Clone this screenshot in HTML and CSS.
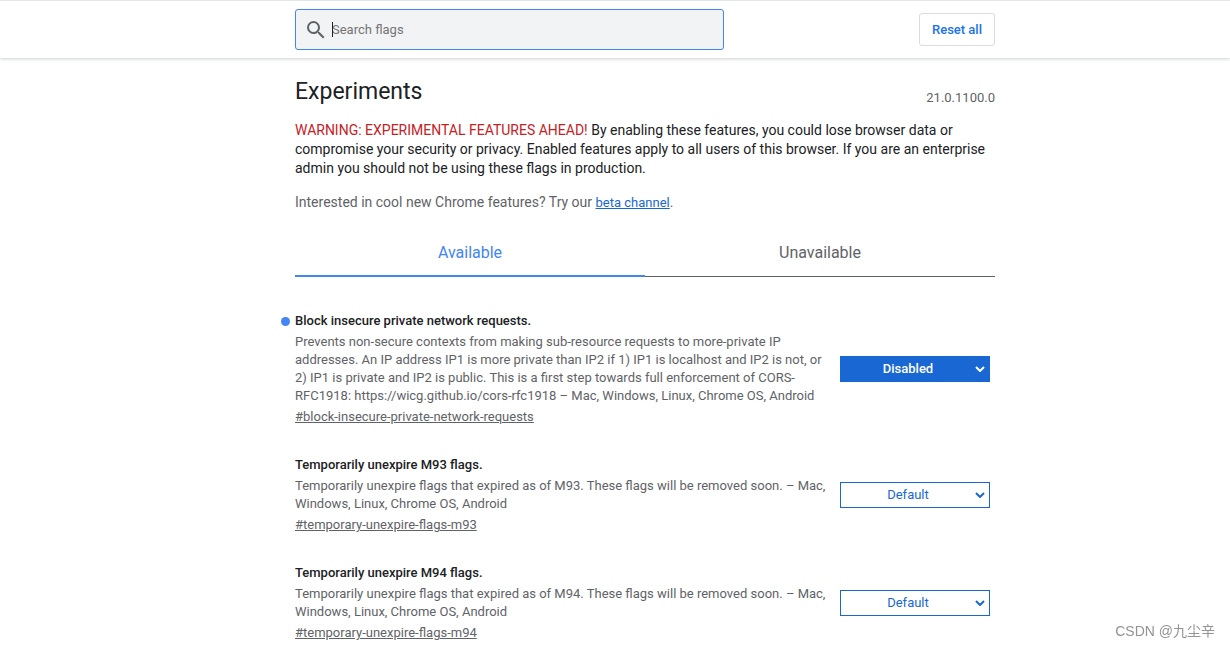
FILE: index.html
```html
<!DOCTYPE html>
<html lang="en">
<head>
<meta charset="utf-8">
<meta name="viewport" content="width=device-width, initial-scale=1">
<title>Experiments</title>
<link rel="stylesheet" href="styles.css">
</head>
<body>
<header class="header">
  <div class="wrap toolbar">
    <div class="search">
      <svg class="search-icon" viewBox="0 0 24 24" aria-hidden="true"><path d="M15.5 14h-.79l-.28-.27A6.47 6.47 0 0 0 16 9.5 6.5 6.5 0 1 0 9.5 16c1.61 0 3.09-.59 4.23-1.57l.27.28v.79l5 4.99L20.49 19l-4.99-5zm-6 0C7.01 14 5 11.99 5 9.5S7.01 5 9.5 5 14 7.01 14 9.5 11.99 14 9.5 14z"/></svg>
      <span class="field">
        <input class="search-input" type="text" placeholder="Search flags" aria-label="Search flags">
        <span class="caret"></span>
      </span>
    </div>
    <button class="reset" type="button">Reset all</button>
  </div>
</header>
<main class="wrap">
  <div class="title-row">
    <h1 class="title">Experiments</h1>
    <span class="version">21.0.1100.0</span>
  </div>
  <p class="blurb"><span class="warning">WARNING: EXPERIMENTAL FEATURES AHEAD!</span> By enabling these features, you could lose browser data or compromise your security or privacy. Enabled features apply to all users of this browser. If you are an enterprise admin you should not be using these flags in production.</p>
  <p class="blurb promo">Interested in cool new Chrome features? Try our <a class="promo-link" href="#beta">beta channel</a>.</p>
  <div class="tabs" role="tablist">
    <button class="tab tab-selected" type="button" role="tab" aria-selected="true">Available</button>
    <button class="tab" type="button" role="tab" aria-selected="false">Unavailable</button>
  </div>
  <section class="flags">
    <article class="flag" id="block-insecure-private-network-requests">
      <div class="flag-text">
        <h2 class="flag-name changed" id="name-block">Block insecure private network requests.</h2>
        <p class="description">Prevents non-secure contexts from making sub-resource requests to more-private IP addresses. An IP address IP1 is more private than IP2 if 1) IP1 is localhost and IP2 is not, or 2) IP1 is private and IP2 is public. This is a first step towards full enforcement of CORS-RFC1918: https://wicg.github.io/cors-rfc1918 – Mac, Windows, Linux, Chrome OS, Android</p>
        <a class="permalink" href="#block-insecure-private-network-requests">#block-insecure-private-network-requests</a>
      </div>
      <div class="control control-changed">
        <select class="select" aria-labelledby="name-block"><option>Default</option><option>Enabled</option><option selected>Disabled</option></select>
        <svg class="chevron" viewBox="0 0 10 6" aria-hidden="true"><path d="M1 1l4 4 4-4"/></svg>
      </div>
    </article>
    <article class="flag" id="temporary-unexpire-flags-m93">
      <div class="flag-text">
        <h2 class="flag-name" id="name-m93">Temporarily unexpire M93 flags.</h2>
        <p class="description">Temporarily unexpire flags that expired as of M93. These flags will be removed soon. – Mac, Windows, Linux, Chrome OS, Android</p>
        <a class="permalink" href="#temporary-unexpire-flags-m93">#temporary-unexpire-flags-m93</a>
      </div>
      <div class="control">
        <select class="select" aria-labelledby="name-m93"><option selected>Default</option><option>Enabled</option><option>Disabled</option></select>
        <svg class="chevron" viewBox="0 0 10 6" aria-hidden="true"><path d="M1 1l4 4 4-4"/></svg>
      </div>
    </article>
    <article class="flag" id="temporary-unexpire-flags-m94">
      <div class="flag-text">
        <h2 class="flag-name" id="name-m94">Temporarily unexpire M94 flags.</h2>
        <p class="description">Temporarily unexpire flags that expired as of M94. These flags will be removed soon. – Mac, Windows, Linux, Chrome OS, Android</p>
        <a class="permalink" href="#temporary-unexpire-flags-m94">#temporary-unexpire-flags-m94</a>
      </div>
      <div class="control">
        <select class="select" aria-labelledby="name-m94"><option selected>Default</option><option>Enabled</option><option>Disabled</option></select>
        <svg class="chevron" viewBox="0 0 10 6" aria-hidden="true"><path d="M1 1l4 4 4-4"/></svg>
      </div>
    </article>
  </section>
</main>
<div class="watermark">CSDN @九尘辛</div>
</body>
</html>
```
FILE: styles.css
```css
* { box-sizing: border-box; }

body {
  margin: 0;
  padding-left: 60px;
  background: #fff;
  color: #202124;
  font: 13px/18px Roboto, "Liberation Sans", sans-serif;
}

h1, h2, p { margin: 0; }
button, input, select { font: inherit; }

.wrap { max-width: 700px; margin: 0 auto; }

.header {
  margin-left: -60px;
  padding: 8px 0 8px 60px;
  border-top: 1px solid #e3e7eb;
  box-shadow: 0 1px 3px rgba(60, 64, 67, .25);
}

.toolbar { display: flex; align-items: center; justify-content: space-between; }

.search {
  display: flex;
  align-items: center;
  flex: 0 1 429px;
  padding: 0 8px;
  border: 1px solid #4285f4;
  border-radius: 3px;
  background: #f1f3f4;
}
.search-icon { width: 24px; height: 24px; fill: #5f6368; }
.field { position: relative; flex: 1; padding-left: 4px; }
.search-input {
  width: 100%;
  height: 39px;
  padding: 0;
  border: 0;
  outline: 0;
  background: transparent;
  color: #202124;
}
.search-input::placeholder { color: #757575; }
.caret {
  position: absolute;
  top: 12px;
  left: 4px;
  width: 1px;
  height: 15px;
  background: #202124;
}

.reset {
  padding: 7px 12px;
  line-height: 17px;
  border: 1px solid #dadce0;
  border-radius: 3px;
  background: #fff;
  color: #1a73e8;
  font-weight: 500;
}

.title-row {
  display: flex;
  align-items: flex-end;
  justify-content: space-between;
  padding-top: 19px;
}
.title { font-size: 23px; line-height: 30px; font-weight: 400; }
.version { color: #5f6368; }

.blurb { margin-top: 14px; font-size: 14px; line-height: 19px; }
.warning { color: #c5221f; }
.promo { margin-top: 15px; color: #5f6368; }
.promo-link { color: #1967d2; font-size: 13px; }

.tabs { display: grid; grid-template-columns: 1fr 1fr; margin-top: 16px; }
.tab {
  height: 49px;
  padding: 2px 0 0;
  border: 0;
  border-bottom: 1px solid #5f6368;
  background: none;
  color: #5f6368;
  font-size: 16px;
}
.tab-selected { border-bottom: 2px solid #4285f4; color: #4285f4; }

.flags { padding-top: 35px; }
.flag {
  display: grid;
  grid-template-columns: minmax(0, 1fr) 150px;
  align-items: center;
  gap: 14px;
  padding-right: 5px;
  margin-bottom: 30px;
}
.flag-name { position: relative; font-size: 13px; line-height: 18px; font-weight: 500; }
.changed::before {
  content: "";
  position: absolute;
  top: 5px;
  left: -14px;
  width: 9px;
  height: 9px;
  border-radius: 50%;
  background: #4285f4;
}
.description { margin-top: 3px; color: #5f6368; }
.permalink { display: block; margin-top: 3px; color: #5f6368; }

.control { position: relative; color: #1967d2; }
.select {
  display: block;
  width: 100%;
  height: 26px;
  padding: 0 14px 0 0;
  appearance: none;
  border: 1px solid #1967d2;
  border-radius: 0;
  background: #fff;
  color: inherit;
  text-align: center;
  text-align-last: center;
}
.control-changed { color: #fff; }
.control-changed .select { background: #1967d2; font-weight: 500; }
.chevron {
  position: absolute;
  top: 10px;
  right: 5px;
  width: 10px;
  height: 6px;
  fill: none;
  stroke: currentColor;
  stroke-width: 2;
  pointer-events: none;
}

.watermark {
  position: fixed;
  right: 15px;
  bottom: 6px;
  color: #939393;
  font: 14px/20px "Liberation Sans", "Noto Sans CJK SC", sans-serif;
}
```
